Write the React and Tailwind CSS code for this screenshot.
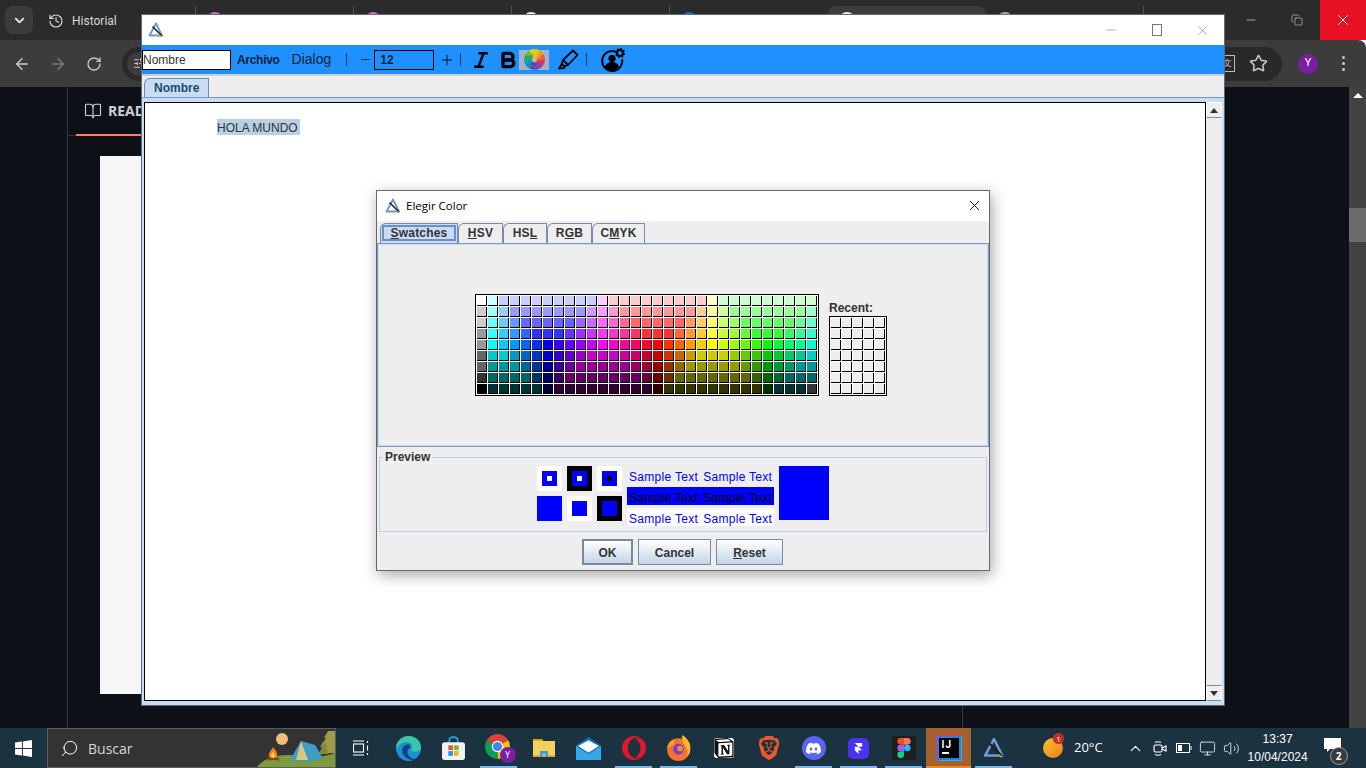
import { ArrowLeft, ArrowRight, RotateCw, Star, History, BookOpen, ChevronDown, ChevronUp, Minus, Plus, X, Copy, Italic, Bold, Volume2, Monitor, Search, SlidersHorizontal } from "lucide-react";
import { SiNotion, SiBrave, SiDiscord, SiFramer, SiOpera } from "react-icons/si";

// Java's default swatch table, [colour, repeat] per run
const SWATCH_ROWS = [
  [["fff", 1], ["cff", 1], ["ccf", 9], ["fcf", 1], ["fcc", 9], ["ffc", 1], ["cfc", 9]],
  [["ccc", 1], ["9ff", 1], ["9cf", 1], ["99f", 7], ["c9f", 1], ["f9f", 1], ["f9c", 1], ["f99", 7], ["fc9", 1], ["ff9", 1], ["cf9", 1], ["9f9", 7], ["9fc", 1]],
  [["ccc", 1], ["6ff", 1], ["6cf", 1], ["69f", 1], ["66f", 5], ["96f", 1], ["c6f", 1], ["f6f", 1], ["f6c", 1], ["f69", 1], ["f66", 5], ["f96", 1], ["fc6", 1], ["ff6", 1], ["cf6", 1], ["9f6", 1], ["6f6", 5], ["6f9", 1], ["6fc", 1]],
  [["999", 1], ["3ff", 1], ["3cf", 1], ["39f", 1], ["36f", 1], ["33f", 3], ["63f", 1], ["93f", 1], ["c3f", 1], ["f3f", 1], ["f3c", 1], ["f39", 1], ["f36", 1], ["f33", 3], ["f63", 1], ["f93", 1], ["fc3", 1], ["ff3", 1], ["cf3", 1], ["9f3", 1], ["6f3", 1], ["3f3", 3], ["3f6", 1], ["3f9", 1], ["3fc", 1]],
  [["999", 1], ["0ff", 1], ["0cf", 1], ["09f", 1], ["06f", 1], ["03f", 1], ["00f", 1], ["30f", 1], ["60f", 1], ["90f", 1], ["c0f", 1], ["f0f", 1], ["f0c", 1], ["f09", 1], ["f06", 1], ["f03", 1], ["f00", 1], ["f30", 1], ["f60", 1], ["f90", 1], ["fc0", 1], ["ff0", 1], ["cf0", 1], ["9f0", 1], ["6f0", 1], ["3f0", 1], ["0f0", 1], ["0f3", 1], ["0f6", 1], ["0f9", 1], ["0fc", 1]],
  [["666", 1], ["0cc", 2], ["09c", 1], ["06c", 1], ["03c", 1], ["00c", 1], ["30c", 1], ["60c", 1], ["90c", 1], ["c0c", 3], ["c09", 1], ["c06", 1], ["c03", 1], ["c00", 1], ["c30", 1], ["c60", 1], ["c90", 1], ["cc0", 3], ["9c0", 1], ["6c0", 1], ["3c0", 1], ["0c0", 1], ["0c3", 1], ["0c6", 1], ["0c9", 1], ["0cc", 1]],
  [["666", 1], ["099", 3], ["069", 1], ["039", 1], ["009", 1], ["309", 1], ["609", 1], ["909", 5], ["906", 1], ["903", 1], ["900", 1], ["930", 1], ["960", 1], ["990", 5], ["690", 1], ["390", 1], ["090", 1], ["093", 1], ["096", 1], ["099", 2]],
  [["333", 1], ["066", 4], ["036", 1], ["006", 1], ["306", 1], ["606", 7], ["603", 1], ["600", 1], ["630", 1], ["660", 7], ["360", 1], ["060", 1], ["063", 1], ["066", 3]],
  [["000", 1], ["033", 5], ["003", 1], ["303", 9], ["300", 1], ["330", 9], ["030", 1], ["033", 3], ["333", 1]],
];
const SWATCHES = SWATCH_ROWS.flatMap((row) => row.flatMap(([c, n]) => Array(n).fill("#" + c)));

const WHEEL = ["#f4c20d", "#f39c12", "#e8632a", "#d6336c", "#a23b9c", "#6a45b0", "#3f58b5", "#1e88c8", "#12a0a0", "#2aa84a", "#7cb82f", "#d4d21c"];

function wedge(cx, cy, r, a0, a1) {
  const p = (a) => [cx + r * Math.cos((a * Math.PI) / 180), cy + r * Math.sin((a * Math.PI) / 180)];
  const [x0, y0] = p(a0);
  const [x1, y1] = p(a1);
  return `M${cx} ${cy}L${x0} ${y0}A${r} ${r} 0 ${a1 - a0 > 180 ? 1 : 0} 1 ${x1} ${y1}Z`;
}

function AppLogo({ size = 16, color = "#6f96c8" }) {
  return (
    <svg width={size} height={size} viewBox="0 0 16 16" fill="none">
      <path d="M8 1.500L1.500 13.500H14L8 1.500Z" stroke={color} strokeWidth="1.800" strokeLinejoin="round" />
      <path d="M4.500 4.500L14 14" stroke="#222" strokeWidth="1.600" />
      <path d="M11 13l3 1.500" stroke="#c8a040" strokeWidth="1.200" />
    </svg>
  );
}

function ColorWheel() {
  return (
    <svg width="21" height="21" viewBox="0 0 24 24">
      {WHEEL.map((c, i) => (
        <path key={c} d={wedge(12, 12, 12, i * 30 - 90, (i + 1) * 30 - 90)} fill={c} />
      ))}
      {WHEEL.map((c, i) => (
        <path key={c} d={wedge(12, 12, 7.500, i * 30 - 75, (i + 1) * 30 - 75)} fill={c} />
      ))}
      <circle cx="12" cy="12" r="3" fill="#c9b79a" />
    </svg>
  );
}

function MarkerIcon() {
  return (
    <svg width="21" height="21" viewBox="0 0 21 21" fill="none" stroke="#000" strokeWidth="1.800" strokeLinejoin="round">
      <path d="M15 1.500L19.500 6L10 16L5 11Z" />
      <path d="M5 11L3.800 15L1 19.500L6 19L7 17.200L10 16" />
      <path d="M6.500 17.500L3.500 14.500" />
    </svg>
  );
}

function UserGear() {
  return (
    <svg width="24" height="24" viewBox="0 0 24 24" fill="none">
      <path d="M14.500 3.600A10 10 0 1 0 21 11" stroke="#000" strokeWidth="2" />
      <circle cx="11" cy="10.500" r="3.600" fill="#000" />
      <path d="M4 19c1-3.600 4-5 7-5s6 1.400 7 5c-2 2.500-4.500 3.500-7 3.500S6 21.500 4 19Z" fill="#000" />
      <circle cx="19" cy="5" r="3" fill="none" stroke="#000" strokeWidth="2.200" />
      <circle cx="19" cy="5" r="4.400" fill="none" stroke="#000" strokeWidth="1.400" strokeDasharray="1.700 1.700" />
    </svg>
  );
}

function Favicon({ color }) {
  return <span className="h-4 w-4 rounded-full" style={{ background: color }} />;
}

function BrowserTab({ color, active, divider }) {
  return (
    <div className={`flex h-[28px] w-[158px] items-center pl-[11px] ${divider ? "border-r border-[#555]" : ""} ${active ? "rounded-t-lg bg-[#3c3c3c]" : ""}`}>
      <Favicon color={color} />
    </div>
  );
}

function ChromeIcon() {
  return (
    <div className="relative h-[28px] w-[28px]">
      <svg width="25" height="25" viewBox="0 0 24 24">
        <path d={wedge(12, 12, 12, -150, -30)} fill="#db4437" />
        <path d={wedge(12, 12, 12, -30, 90)} fill="#f4c20d" />
        <path d={wedge(12, 12, 12, 90, 210)} fill="#0f9d58" />
        <circle cx="12" cy="12" r="5.600" fill="#fff" />
        <circle cx="12" cy="12" r="4.400" fill="#4285f4" />
      </svg>
      <span className="absolute right-[-3px] bottom-[-1px] flex h-[16px] w-[16px] items-center justify-center rounded-full bg-[#7b1fa2] text-[9px] text-white">Y</span>
    </div>
  );
}

function EdgeIcon() {
  return (
    <svg width="25" height="25" viewBox="0 0 24 24">
      <circle cx="12" cy="12" r="12" fill="#1f8fd6" />
      <path d="M0 12C0 5 6 0 12 0c7 0 12 5 12 11 0 3-3 4-6 4-2 0-4-1-4-2 2-1 2-3 1-5-2-3-8-3-11 0-2 2-4 3-4 4Z" fill="#38c6a8" />
      <path d="M12 8c-4 0-6 3-6 6 0 5 5 9 10 9 1 0 2 0 3-1-4 0-8-3-8-7 0-2 1-3 3-3-1-2-1-4-2-4Z" fill="#12457f" />
    </svg>
  );
}

function StoreIcon() {
  return (
    <svg width="25" height="25" viewBox="0 0 24 24">
      <path d="M8 6V4c0-2 1-3 4-3s4 1 4 3v2" fill="none" stroke="#29a9e8" strokeWidth="1.600" />
      <rect x="1" y="6" width="22" height="17" rx="2.500" fill="#f3f3f3" />
      <rect x="7" y="9" width="4.500" height="4.500" fill="#e8532a" />
      <rect x="12.500" y="9" width="4.500" height="4.500" fill="#7cb82f" />
      <rect x="7" y="14.500" width="4.500" height="4.500" fill="#1e9be8" />
      <rect x="12.500" y="14.500" width="4.500" height="4.500" fill="#f4b90d" />
    </svg>
  );
}

function FolderIcon() {
  return (
    <svg width="24" height="24" viewBox="0 0 24 24">
      <path d="M1 3h9l2 2.500H1Z" fill="#d9a520" />
      <rect x="1" y="5" width="22" height="16" fill="#f6cf5c" />
      <rect x="1" y="19" width="22" height="2" fill="#e0ac2c" />
      <path d="M8 21v-6h8v6h-2.500v-3h-3v3Z" fill="#3c9be0" />
    </svg>
  );
}

function MailIcon() {
  return (
    <svg width="25" height="25" viewBox="0 0 24 24">
      <path d="M0 9L12 1l12 8v14H0Z" fill="#0f6cb4" />
      <path d="M2 9.500L12 4l10 5.500-10 6.500Z" fill="#fff" />
      <path d="M0 9.500l12 8 12-8V23H0Z" fill="#36a8e8" />
    </svg>
  );
}

function FirefoxIcon() {
  return (
    <svg width="26" height="26" viewBox="0 0 24 24">
      <circle cx="11.500" cy="13.500" r="10.500" fill="#f4742a" />
      <path d="M15 0c5 3 8 8 7.500 13 0 3-1 5-3 7 1-4 0-8-2-10-2-3-3-6-2.500-10Z" fill="#fbb731" />
      <path d="M1 12C2 7 5 5 8 4c-1 2-1 3 0 4Z" fill="#f9a02c" />
      <circle cx="11.500" cy="13" r="5" fill="#7b3fc4" />
      <circle cx="13" cy="12.500" r="2.600" fill="#f58a3c" />
    </svg>
  );
}

function FigmaIcon() {
  return (
    <div className="flex h-[24px] w-[24px] items-center justify-center bg-[#1e1e1e]">
      <svg width="14" height="20" viewBox="0 0 12 18">
        <path d="M6 0H3a3 3 0 0 0 0 6h3Z" fill="#f24e1e" />
        <path d="M6 0h3a3 3 0 0 1 0 6H6Z" fill="#ff7262" />
        <path d="M6 6H3a3 3 0 0 0 0 6h3Z" fill="#a259ff" />
        <circle cx="9" cy="9" r="3" fill="#1abcfe" />
        <path d="M6 12H3a3 3 0 1 0 3 3Z" fill="#0acf83" />
      </svg>
    </div>
  );
}

function IntellijIcon() {
  return (
    <div className="flex h-[20px] w-[20px] flex-col bg-black pl-[3px] pt-[2px] leading-none shadow-[0_0_0_2px_#2a7fe0,-1px_-1px_0_2px_#e0358c,1px_1px_0_2px_#27b5e8]">
      <span className="font-['Roboto',sans-serif] text-[10px] font-bold tracking-[1px] text-white">IJ</span>
      <span className="mt-[2px] h-[2px] w-[7px] bg-white" />
    </div>
  );
}

function TaskItem({ children, running, active }) {
  return (
    <div className={`relative flex h-full w-[45px] items-center justify-center ${active ? "bg-[#a5622f]" : ""}`}>
      {children}
      {running && <span className="absolute bottom-0 left-[4px] right-[4px] h-[2px] bg-[#76b9ed]" />}
      {active && <span className="absolute bottom-0 left-0 right-0 h-[2px] bg-[#f08a24]" />}
    </div>
  );
}

function CampScene() {
  return (
    <svg width="78" height="38" viewBox="0 0 78 38" className="self-end">
      <circle cx="25" cy="10" r="6" fill="#eebd78" />
      <path d="M0 38C8 28 24 24 44 27c14 2 26 0 34-3v14Z" fill="#7f9a3c" />
      <path d="M71 2l-4 7h2l-4 7h2l-4 8h16V2Z" fill="#a09c48" />
      <path d="M66 12l-3 6h2l-3 7h10l-3-7h2Z" fill="#7f8c3c" />
      <path d="M33 31L44 12l14 4 8 13-14 4Z" fill="#3f9cc4" />
      <path d="M44 12l-5 19h12Z" fill="#d8c67c" />
      <path d="M16 18c2 3 5 5 4 9-1 3-7 3-8 0-1-3 2-5 4-9Z" fill="#ef7f1f" />
      <path d="M16 23c1 1 2 2 2 4s-4 2-4 0 1-3 2-4Z" fill="#fbd24a" />
      <path d="M10 31l12-2M10 29l12 2" stroke="#7a4a24" strokeWidth="1.600" />
    </svg>
  );
}

function ChromeWindow() {
  return (
    <div className="flex min-h-0 flex-1 flex-col">
      <div className="flex h-10 shrink-0 bg-[#2b2b2b]">
        <div className="ml-[5px] mt-[6px] flex h-[28px] w-[28px] items-center justify-center rounded-lg bg-[#3c3c3c]">
          <ChevronDown size={15} strokeWidth={3} color="#e6e6e6" />
        </div>
        <div className="ml-[5px] mt-[6px] flex h-[30px] w-[158px] items-center gap-[8px] border-r border-[#555] pl-[10px] text-[12px] text-[#d8d8d8]">
          <History size={16} strokeWidth={1.75} />
          <span className="font-['Roboto',sans-serif]">Historial</span>
        </div>
        <div className="mt-[6px] flex">
          <BrowserTab color="#d070c0" divider />
          <BrowserTab color="#d070c0" divider />
          <BrowserTab color="#e8e8e8" divider />
          <BrowserTab color="#1f6fc0" />
          <BrowserTab color="#e8e8e8" active />
          <BrowserTab color="#b0b0b0" divider />
        </div>
        <div className="ml-auto flex items-start">
          <div className="flex h-10 w-[47px] items-center justify-center text-[#c8c8c8]">
            <Minus size={14} strokeWidth={1.25} />
          </div>
          <div className="flex h-10 w-[46px] items-center justify-center text-[#c8c8c8]">
            <Copy size={12} strokeWidth={1.25} />
          </div>
          <div className="flex h-10 w-[46px] items-center justify-center bg-[#e81123] text-white">
            <X size={18} strokeWidth={1.25} />
          </div>
        </div>
      </div>

      <div className="flex h-[47px] shrink-0 items-center rounded-tr-lg bg-[#3c3c3c] text-[#c8c8c8]">
        <div className="flex w-[44px] justify-center"><ArrowLeft size={18} strokeWidth={2} /></div>
        <div className="flex w-[28px] justify-center text-[#777]"><ArrowRight size={18} strokeWidth={2} /></div>
        <div className="flex w-[44px] justify-center"><RotateCw size={16} strokeWidth={2} /></div>
        <div className="ml-[6px] flex h-[34px] w-[1160px] items-center gap-[14px] rounded-full bg-[#292929] pl-[5px] pr-[14px]">
          <span className="flex h-[24px] w-[24px] items-center justify-center rounded-full bg-[#3c3c3c]">
            <SlidersHorizontal size={13} strokeWidth={2} />
          </span>
          <span className="ml-auto flex h-[17px] w-[16px] items-center justify-center border border-[#bbb] text-[9px]">文</span>
          <Star size={19} strokeWidth={2} />
        </div>
        <span className="ml-[16px] flex h-5 w-5 items-center justify-center rounded-full bg-[#7b1fa2] font-['Roboto',sans-serif] text-[11px] text-white">Y</span>
        <div className="ml-[24px] flex flex-col gap-[3px]">
          <span className="h-[3px] w-[3px] rounded-full bg-[#c8c8c8]" />
          <span className="h-[3px] w-[3px] rounded-full bg-[#c8c8c8]" />
          <span className="h-[3px] w-[3px] rounded-full bg-[#c8c8c8]" />
        </div>
      </div>

      <div className="flex min-h-0 flex-1 bg-[#0d1117]">
        <div className="w-[68px] shrink-0 border-r border-[#30363d]" />
        <div className="w-[895px] shrink-0 border-r border-[#30363d]">
          <div className="h-[49px] border-b border-[#30363d] pl-[8px]">
            <div className="flex h-[49px] w-[65px] items-center gap-[6px] border-b-2 border-[#f78166] pl-[8px] text-[#c9d1d9]">
              <BookOpen size={18} strokeWidth={1.5} className="shrink-0" />
              <span className="font-['Open_Sans',sans-serif] text-[14px] font-bold">READ</span>
            </div>
          </div>
          <div className="pl-[32px] pt-[20px]">
            <div className="h-[538px] w-[800px] bg-[#f6f6f6]" />
          </div>
        </div>
        <div className="ml-auto flex w-[17px] flex-col items-center bg-[#424242] pt-[6px]">
          <span className="h-0 w-0 border-x-[5px] border-b-[5px] border-x-transparent border-b-white" />
          <span className="mt-[110px] h-[34px] w-full bg-[#6b6b6b]" />
        </div>
      </div>
    </div>
  );
}

function Taskbar() {
  return (
    <div className="flex h-10 shrink-0 items-stretch bg-[#1b3340] font-['Open_Sans',sans-serif] text-white">
      <div className="flex w-[47px] items-center justify-center">
        <svg width="17" height="17" viewBox="0 0 16 16" fill="#fff">
          <path d="M0 2.300L6.500 1.400V7.500H0ZM7.400 1.300L16 0V7.500H7.400ZM0 8.500H6.500V14.600L0 13.700ZM7.400 8.500H16V16L7.400 14.700Z" />
        </svg>
      </div>
      <div className="flex w-[289px] items-center border border-[#5c5c5c] bg-[#333] pl-[12px]">
        <Search size={19} strokeWidth={1.25} className="-scale-x-100" />
        <span className="ml-[9px] text-[14px] text-[#d8d8d8]">Buscar</span>
        <div className="ml-auto flex h-full items-end"><CampScene /></div>
      </div>
      <div className="flex w-[50px] items-center justify-center">
        <svg width="16" height="16" viewBox="0 0 16 16" fill="none" stroke="#fff" strokeWidth="1.100">
          <rect x="0.500" y="4" width="10" height="8" />
          <path d="M0 1h11M0 15h11M14.500 1v2M14.500 5.500v5M14.500 13v2" />
        </svg>
      </div>
      <TaskItem><EdgeIcon /></TaskItem>
      <TaskItem><StoreIcon /></TaskItem>
      <TaskItem running><ChromeIcon /></TaskItem>
      <TaskItem><FolderIcon /></TaskItem>
      <TaskItem><MailIcon /></TaskItem>
      <TaskItem running><SiOpera size={24} color="#e0182d" /></TaskItem>
      <TaskItem running><FirefoxIcon /></TaskItem>
      <TaskItem>
        <span className="flex h-[20px] w-[20px] items-center justify-center rounded-[3px] bg-white"><SiNotion size={20} color="#111" /></span>
      </TaskItem>
      <TaskItem><SiBrave size={24} color="#f0562a" /></TaskItem>
      <TaskItem running>
        <span className="flex h-[24px] w-[24px] items-center justify-center rounded-full bg-[#5865f2]"><SiDiscord size={15} color="#fff" /></span>
      </TaskItem>
      <TaskItem running>
        <span className="flex h-[21px] w-[21px] items-center justify-center rounded-[5px] bg-[#4b32ef]"><SiFramer size={11} color="#fff" /></span>
      </TaskItem>
      <TaskItem running><FigmaIcon /></TaskItem>
      <TaskItem active><IntellijIcon /></TaskItem>
      <TaskItem running><AppLogo size={22} color="#6f9ed0" /></TaskItem>

      <div className="ml-[27px] flex items-center">
        <span className="relative h-[20px] w-[20px] rounded-full bg-linear-to-br from-[#f9c22e] to-[#ee7b1e]">
          <span className="absolute left-[10px] top-[-5px] flex h-[11px] w-[11px] items-center justify-center rounded-full bg-[#c42b2b] text-[8px] leading-none">1</span>
        </span>
        <span className="ml-[11px] text-[13px]">20°C</span>
      </div>
      <div className="ml-[21px] flex items-center">
        <div className="flex w-[24px] justify-center"><ChevronUp size={17} strokeWidth={1.5} /></div>
        <div className="flex w-[24px] justify-center">
          <svg width="14" height="16" viewBox="0 0 14 16" fill="none" stroke="#fff" strokeWidth="1.100">
            <rect x="1" y="5" width="8" height="7" rx="1.500" />
            <path d="M9 8l4-2v5l-4-2M2 2.500c2-1 4-1 6 0M2 14.500c2 1 4 1 6 0" />
          </svg>
        </div>
        <div className="flex w-[24px] justify-center">
          <svg width="16" height="10" viewBox="0 0 16 10" fill="none" stroke="#fff">
            <rect x="0.500" y="0.500" width="13" height="9" />
            <rect x="2" y="2" width="4" height="6" fill="#fff" stroke="none" />
            <path d="M15 3v4" />
          </svg>
        </div>
        <div className="flex w-[24px] justify-center"><Monitor size={17} strokeWidth={1.1} /></div>
        <div className="flex w-[24px] justify-center"><Volume2 size={17} strokeWidth={1.1} /></div>
      </div>
      <div className="ml-[-5px] flex w-[78px] flex-col items-center justify-center font-['Liberation_Sans',sans-serif] text-[12px] leading-[18px]">
        <span>13:37</span>
        <span>10/04/2024</span>
      </div>
      <div className="relative ml-[2px] flex w-[28px] items-start justify-center pt-[10px]">
        <svg width="17" height="15" viewBox="0 0 17 15" fill="#fff">
          <path d="M0 0h17v11H6l-3 3v-3H0Z" />
        </svg>
        <span className="absolute left-[12px] top-[20px] flex h-[16px] w-[16px] items-center justify-center rounded-full bg-[#3a3a3a] text-[10px] font-bold ring-1 ring-[#999]">2</span>
      </div>
    </div>
  );
}

function ToolSep({ className }) {
  return <span className={`h-[13px] w-px bg-[#1b3a5c] ${className}`} />;
}

function MainWindow() {
  return (
    <div className="absolute left-[141px] top-[14px] flex h-[692px] w-[1084px] flex-col border border-[#5f6a72] bg-[#eeeeee] text-[12px] text-[#333]">
      <div className="flex h-[30px] shrink-0 items-center bg-white pl-[6px] text-[#777]">
        <AppLogo />
        <div className="ml-auto flex items-center">
          <div className="flex w-[46px] justify-center"><Minus size={14} strokeWidth={1} /></div>
          <div className="flex w-[46px] justify-center"><span className="h-[12px] w-[10px] border border-[#777]" /></div>
          <div className="flex w-[44px] justify-center"><X size={15} strokeWidth={1} /></div>
        </div>
      </div>

      <div className="flex h-[29px] shrink-0 items-center bg-[#1e90ff] text-black">
        <input
          readOnly
          value="Nombre"
          className="h-[20px] w-[89px] border border-black bg-white text-[12px] text-[#333] outline-none"
        />
        <span className="ml-[6px] font-bold tracking-[-0.3px] text-[#10233a]">Archivo</span>
        <span className="ml-[12px] text-[14px] text-[#10233a]">Dialog</span>
        <ToolSep className="ml-[15px]" />
        <Minus size={13} strokeWidth={1.25} className="ml-[12px]" />
        <span className="ml-[2px] flex h-[20px] w-[60px] items-center border border-black pl-[5px] font-bold text-[#10233a]">12</span>
        <Plus size={16} strokeWidth={1.25} className="ml-[5px]" />
        <ToolSep className="ml-[5px]" />
        <Italic size={20} strokeWidth={3} className="ml-[10px]" />
        <Bold size={20} strokeWidth={4} className="ml-[7px]" />
        <span className="ml-px flex h-[20px] w-[30px] items-center justify-center bg-[#a3b4c8]"><ColorWheel /></span>
        <span className="ml-[9px]"><MarkerIcon /></span>
        <ToolSep className="ml-[7px]" />
        <span className="ml-[14px]"><UserGear /></span>
      </div>

      <div className="h-[23px] shrink-0 border-t-2 border-[#cfcfcf] pl-[2px] pt-[2px]">
        <div className="flex h-[19px] w-[65px] items-center rounded-tl-[6px] border border-b-0 border-[#6a8ab8] bg-[#c8ddf2] pl-[9px] font-bold text-[#1c4a70]">
          Nombre
        </div>
      </div>

      <div className="flex min-h-0 flex-1 border-t border-[#7a94c0] bg-[#c8ddf2] px-[2px] pb-[4px] pt-[4px]">
        <div className="flex-1 border border-black bg-white pl-[72px] pt-[16px]">
          <span className="flex h-[16px] w-[83px] items-center bg-[#b8cfe5] pt-px">HOLA MUNDO</span>
        </div>
        <div className="flex w-[16px] flex-col bg-[#eeeeee]">
          <div className="flex h-[16px] items-center justify-center border border-white border-b-[#7a8ea8] bg-[#eeeeee]">
            <span className="h-0 w-0 border-x-[4px] border-b-[5px] border-x-transparent border-b-[#333]" />
          </div>
          <div className="flex-1 bg-[#eeeeee]" />
          <div className="flex h-[16px] items-center justify-center border border-[#7a8ea8] border-x-white bg-[#eeeeee]">
            <span className="h-0 w-0 border-x-[4px] border-t-[5px] border-x-transparent border-t-[#333]" />
          </div>
        </div>
      </div>
    </div>
  );
}

function ChooserTab({ w, selected, children }) {
  return (
    <div
      style={{ width: w }}
      className={`flex h-[20px] items-center justify-center rounded-tl-[6px] border border-b-0 border-[#7a8aaa] pb-px font-bold tracking-[0.2px] ${selected ? "bg-[#c8ddf2]" : "bg-[#eeeeee]"}`}
    >
      {selected ? (
        <span className="flex h-[16px] w-[74px] items-center justify-center border-2 border-[#6a8fd0]">{children}</span>
      ) : (
        children
      )}
    </div>
  );
}

function PreviewBox({ frame, center }) {
  return (
    <div className={`flex h-[25px] w-[25px] items-center justify-center ${frame}`}>
      <div className="flex h-[15px] w-[15px] items-center justify-center bg-[#0000ff]">
        {center && <span className={`h-[5px] w-[5px] ${center}`} />}
      </div>
    </div>
  );
}

function SampleRow({ className }) {
  return (
    <div className={`flex items-center gap-[5px] pl-[2px] tracking-[0.3px] ${className}`}>
      <span>Sample Text</span>
      <span>Sample Text</span>
    </div>
  );
}

function DialogButton({ w, thick, children }) {
  return (
    <button
      type="button"
      style={{ width: w }}
      className={`h-[26px] bg-linear-to-b from-white to-[#c3d5e8] pt-px font-bold text-[#333] ${thick ? "border-2 border-[#7a8a9e]" : "border border-[#7a8a9e]"}`}
    >
      {children}
    </button>
  );
}

function ColorDialog() {
  return (
    <div className="absolute left-[376px] top-[190px] flex h-[381px] w-[614px] flex-col border border-[#5f6a72] bg-[#eeeeee] text-[12px] text-[#333] shadow-[2px_4px_14px_rgba(0,0,0,0.35)]">
      <div className="flex h-[30px] shrink-0 items-center bg-white pl-[8px] font-['Open_Sans',sans-serif] text-black">
        <AppLogo />
        <span className="ml-[5px] text-[11.500px]">Elegir Color</span>
        <X size={17} strokeWidth={1.25} className="ml-auto mb-[2px] mr-[6px]" />
      </div>

      <div className="flex h-[22px] shrink-0 items-end pl-[3px]">
        <ChooserTab w={78} selected><span><span className="underline">S</span>watches</span></ChooserTab>
        <ChooserTab w={45}><span><span className="underline">H</span>SV</span></ChooserTab>
        <ChooserTab w={44}><span>HS<span className="underline">L</span></span></ChooserTab>
        <ChooserTab w={45}><span>R<span className="underline">G</span>B</span></ChooserTab>
        <ChooserTab w={53}><span>C<span className="underline">M</span>YK</span></ChooserTab>
      </div>

      <div className="flex h-[204px] shrink-0 items-center justify-center border border-[#7f97b8] pr-[4px] ring-1 ring-inset ring-[#c8ddf2]">
        <div className="grid grid-cols-[repeat(31,10px)] gap-px border border-black bg-white p-px">
          {SWATCHES.map((c, i) => (
            <span key={i} style={{ background: c }} className="h-[10px] w-[10px] border-b border-r border-black" />
          ))}
        </div>
        <div className="ml-[10px] flex flex-col self-end pb-[50px]">
          <span className="mb-[1px] font-bold leading-[14px]">Recent:</span>
          <div className="grid grid-cols-[repeat(5,10px)] gap-px border border-black bg-white p-px">
            {Array.from({ length: 35 }, (_, i) => (
              <span key={i} className="h-[10px] w-[10px] border-b border-r border-black bg-[#eeeeee]" />
            ))}
          </div>
        </div>
      </div>

      <fieldset className="mx-[2px] mt-[4px] h-[81px] shrink-0 border border-[#b8cfe5]">
        <legend className="ml-[3px] px-[2px] font-bold leading-[13px]">Preview</legend>
        <div className="flex items-start pl-[157px] pt-[2px]">
          <div className="grid grid-cols-[repeat(3,25px)] gap-[5px]">
            <PreviewBox frame="bg-white" center="bg-white" />
            <PreviewBox frame="bg-black" center="bg-white" />
            <PreviewBox frame="bg-white" center="bg-black" />
            <PreviewBox frame="bg-[#0000ff]" />
            <PreviewBox frame="bg-white" />
            <PreviewBox frame="bg-black" />
          </div>
          <div className="ml-[5px] flex w-[147px] flex-col">
            <SampleRow className="h-[21px] pt-[1px] text-[#0000ff]" />
            <SampleRow className="h-[18px] bg-[#0000ff] pt-[3px] text-black" />
            <SampleRow className="mt-[3px] h-[18px] bg-white pt-[3px] text-[#0000ff]" />
          </div>
          <div className="ml-[5px] h-[54px] w-[50px] bg-[#0000ff]" />
        </div>
      </fieldset>

      <div className="flex justify-center gap-[5px] pr-px pt-[7px]">
        <DialogButton w={51} thick>OK</DialogButton>
        <DialogButton w={73}>Cancel</DialogButton>
        <DialogButton w={67}><span className="underline">R</span>eset</DialogButton>
      </div>
    </div>
  );
}

export default function App() {
  return (
    <div className="relative flex h-[768px] w-[1366px] flex-col overflow-hidden font-['Liberation_Sans',Arial,sans-serif]">
      <ChromeWindow />
      <Taskbar />
      <MainWindow />
      <ColorDialog />
    </div>
  );
}
